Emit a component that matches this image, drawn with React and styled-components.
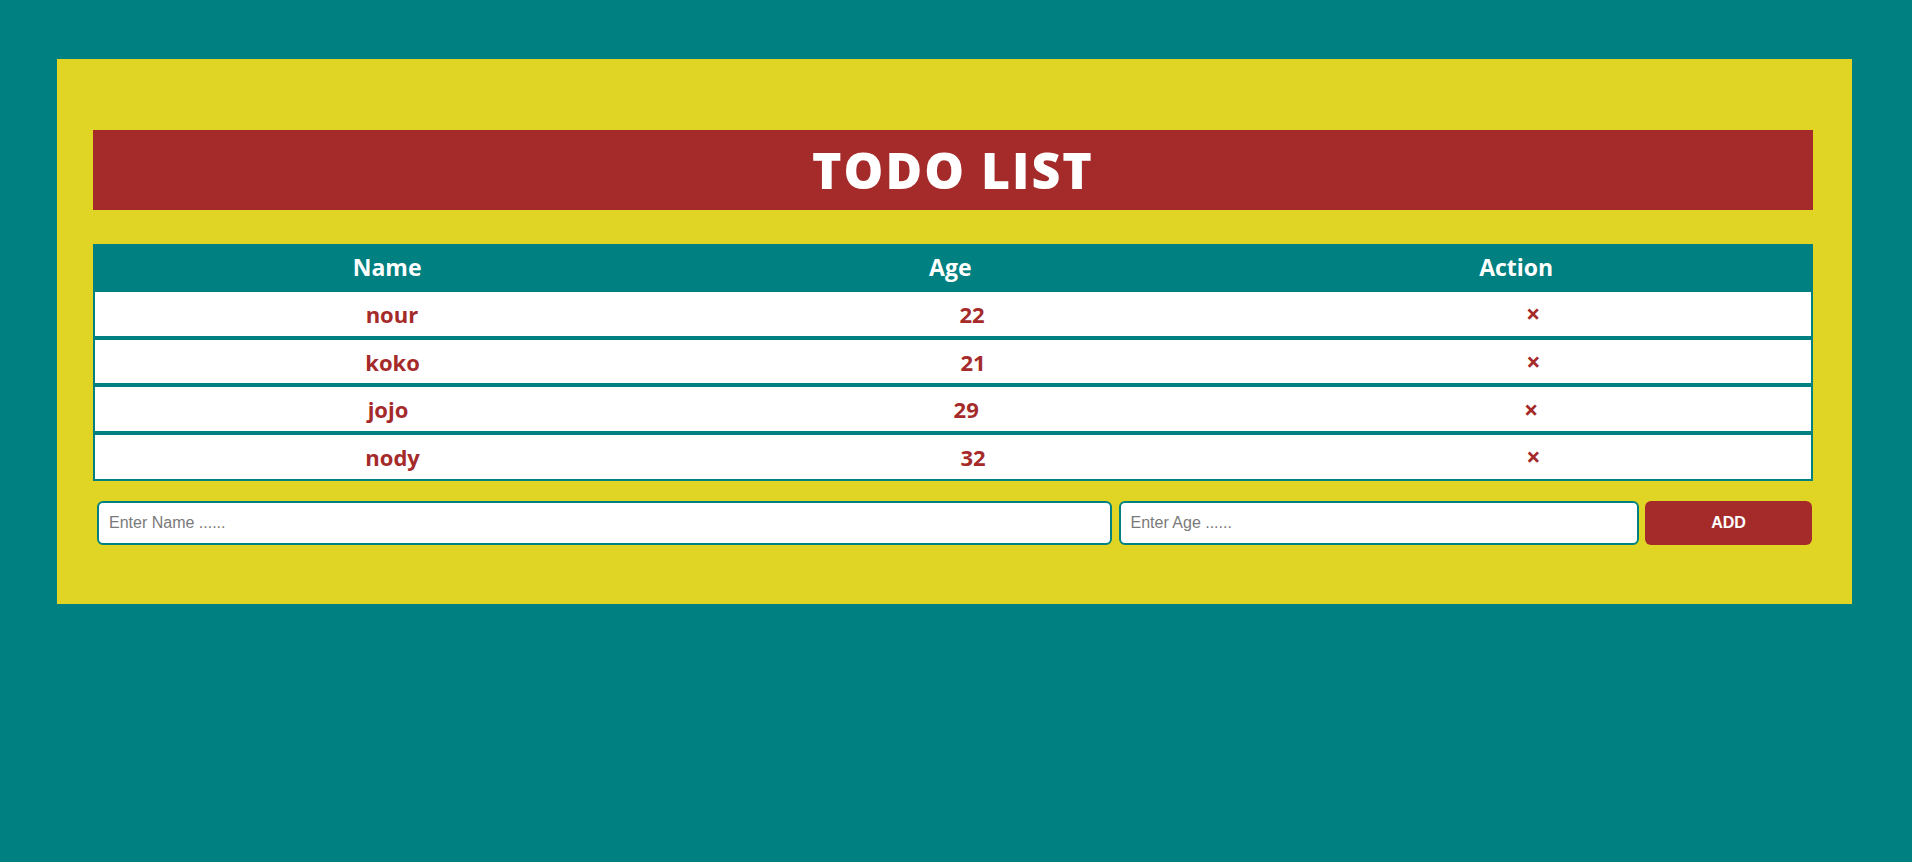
import React from "react";
import styled, { createGlobalStyle } from "styled-components";

const GlobalStyle = createGlobalStyle`
  html, body {
    margin: 0;
    padding: 0;
    background-color: #008080;
    min-height: 100vh;
    font-family: "Open Sans", "Liberation Sans", sans-serif;
  }
  * {
    box-sizing: border-box;
  }
`;

const Page = styled.div`
  min-height: 862px;
  padding: 59px 60px 0 57px;
  background-color: #008080;
`;

const Panel = styled.div`
  background-color: #e0d424;
  padding: 71px 39px 59px 36px;
`;

const Title = styled.h1`
  margin: 0;
  height: 80px;
  display: flex;
  align-items: center;
  justify-content: center;
  background-color: #a52a2a;
  color: #fff;
  font-family: "Open Sans", sans-serif;
  font-weight: 800;
  font-size: 50px;
  letter-spacing: 2px;
`;

const Table = styled.div`
  margin-top: 34px;
  display: flex;
  flex-direction: column;
`;

const HeadRow = styled.div`
  height: 46px;
  display: flex;
  align-items: center;
  justify-content: space-around;
  padding: 0 6px;
  background-color: #008080;
`;

const HeadCell = styled.span`
  color: #fff;
  font-weight: 700;
  font-size: 23px;
`;

const Row = styled.div`
  height: 47.7px;
  display: flex;
  align-items: center;
  justify-content: space-around;
  background-color: #fff;
  border: 2px solid #008080;
`;

const Cell = styled.span`
  color: #a52a2a;
  font-weight: 700;
  font-size: 22px;
  line-height: 1;
`;

const RemoveButton = styled.button`
  border: none;
  background: transparent;
  padding: 0;
  color: #a52a2a;
  font-family: "Open Sans", sans-serif;
  font-weight: 700;
  font-size: 25px;
  line-height: 1;
  cursor: pointer;
`;

const Form = styled.form`
  margin: 20px 1px 0 4px;
  display: grid;
  grid-template-columns: 1015fr 520fr 167fr;
  gap: 6.5px;
`;

const Input = styled.input`
  height: 44px;
  border: 2px solid #008080;
  border-radius: 6px;
  background: #fff;
  padding: 0 10px;
  font-family: "Liberation Sans", Arial, sans-serif;
  font-size: 16px;
  color: #333;
  outline: none;
  &::placeholder {
    color: #7a7a7a;
  }
`;

const AddButton = styled.button`
  height: 44px;
  border: none;
  border-radius: 6px;
  background-color: #a52a2a;
  color: #fff;
  font-family: "Liberation Sans", Arial, sans-serif;
  font-weight: 700;
  font-size: 16px;
  cursor: pointer;
`;

const people = [
  { name: "nour", age: 22 },
  { name: "koko", age: 21 },
  { name: "jojo", age: 29 },
  { name: "nody", age: 32 },
];

export default function App() {
  return (
    <Page>
      <GlobalStyle />
      <Panel>
        <Title>TODO LIST</Title>
        <Table>
          <HeadRow>
            <HeadCell>Name</HeadCell>
            <HeadCell>Age</HeadCell>
            <HeadCell>Action</HeadCell>
          </HeadRow>
          {people.map((p) => (
            <Row key={p.name}>
              <Cell>{p.name}</Cell>
              <Cell>{p.age}</Cell>
              <RemoveButton type="button">×</RemoveButton>
            </Row>
          ))}
        </Table>
        <Form onSubmit={(e) => e.preventDefault()}>
          <Input type="text" placeholder="Enter Name ......" />
          <Input type="text" placeholder="Enter Age ......" />
          <AddButton type="submit">ADD</AddButton>
        </Form>
      </Panel>
    </Page>
  );
}
